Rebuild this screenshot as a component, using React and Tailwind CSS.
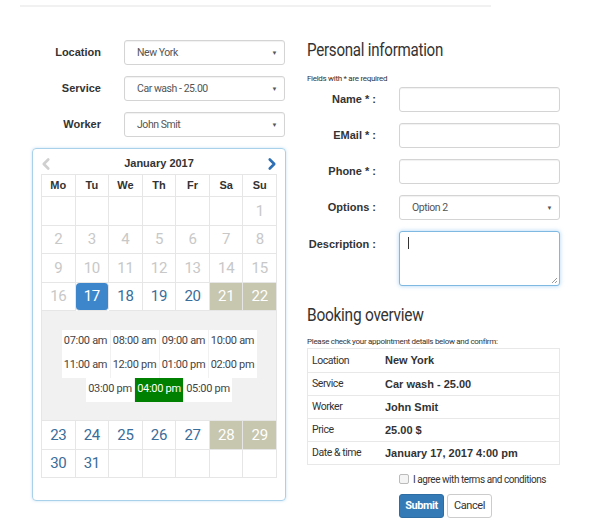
import { ChevronLeft, ChevronRight } from "lucide-react";

const NARROW = { fontFamily: 'Roboto, "Liberation Sans", sans-serif', letterSpacing: "-0.3px" };
const TIGHT = { fontFamily: 'Roboto, "Liberation Sans", sans-serif', letterSpacing: "-0.45px" };
const SANS = { fontFamily: '"Liberation Sans", Arial, sans-serif' };

const WEEKS_TOP = [
  [null, null, null, null, null, null, 1],
  [2, 3, 4, 5, 6, 7, 8],
  [9, 10, 11, 12, 13, 14, 15],
  [16, 17, 18, 19, 20, 21, 22],
];
const WEEKS_BOTTOM = [
  [23, 24, 25, 26, 27, 28, 29],
  [30, 31, null, null, null, null, null],
];
const SLOTS = [
  ["07:00 am", "08:00 am", "09:00 am", "10:00 am"],
  ["11:00 am", "12:00 pm", "01:00 pm", "02:00 pm"],
  ["03:00 pm", "04:00 pm", "05:00 pm"],
];

function dayClass(d, col) {
  if (d === null) return "";
  if (d === 17) return "bg-[#3d86cc] text-white rounded-[4px]";
  if (col >= 5 && d >= 21) return "bg-[#c7c6ae] text-white";
  if (d < 17) return "text-[#c8c8c8]";
  return "text-[#3a6d9a]";
}

function WeekRow({ week }) {
  return (
    <div className="grid grid-cols-7">
      {week.map((d, i) => (
        <div
          key={i}
          className={`h-[28.5px] flex items-center justify-center border-r border-b border-[#e6e6e6] text-[15px] ${dayClass(d, i)}`}
        >
          {d}
        </div>
      ))}
    </div>
  );
}

function SelectBox({ value }) {
  return (
    <div
      className="h-[25px] w-[161px] border border-[#d4d4d4] rounded-[3px] bg-white flex items-center justify-between pl-[12px] pr-[7px] text-[10.5px] text-[#555] shadow-[inset_0_1px_1px_rgba(0,0,0,0.06)]"
      style={TIGHT}
    >
      <span>{value}</span>
      <span className="text-[6px] text-[#555]">▼</span>
    </div>
  );
}

function TextInput() {
  return (
    <div className="h-[25px] w-[161px] border border-[#d4d4d4] rounded-[3px] bg-white shadow-[inset_0_1px_1px_rgba(0,0,0,0.06)]" />
  );
}

function FormRow({ label, children }) {
  return (
    <div className="flex items-center">
      <div className="w-[70px] pr-[1px] text-right text-[11px] font-bold text-[#333] whitespace-nowrap" style={SANS}>
        {label}
      </div>
      <div className="ml-[22px]">{children}</div>
    </div>
  );
}

const OVERVIEW = [
  ["Location", "New York"],
  ["Service", "Car wash - 25.00"],
  ["Worker", "John Smit"],
  ["Price", "25.00 $"],
  ["Date & time", "January 17, 2017 4:00 pm"],
];

export default function App() {
  return (
    <div className="w-[605px] h-[530px] bg-white relative overflow-hidden" style={SANS}>
      <div className="ml-[20px] mt-[5px] w-[471px] h-[2px] bg-[#f1f1f1]" />

      <div className="flex ml-[32px] mt-[33px] gap-[21px]">
        {/* Left column */}
        <div className="w-[254px]">
          <div className="flex flex-col gap-[11px]">
            <FormRow label="Location"><SelectBox value="New York" /></FormRow>
            <FormRow label="Service"><SelectBox value="Car wash - 25.00" /></FormRow>
            <FormRow label="Worker"><SelectBox value="John Smit" /></FormRow>
          </div>

          <div className="mt-[11px] h-[353px] border border-[#a9d2ea] rounded-[4px] shadow-[0_0_3px_rgba(100,170,220,0.35)] px-[8px] pt-[4px]">
            <div className="h-[21px] flex items-center justify-between">
              <ChevronLeft size={18} strokeWidth={3.5} className="text-[#cfcfcf] -ml-[4px]" />
              <span className="text-[11px] font-bold text-[#333]">January 2017</span>
              <ChevronRight size={18} strokeWidth={3.5} className="text-[#2d6fb5] -mr-[4px]" />
            </div>
            <div className="border-l border-t border-[#e6e6e6]">
              <div className="grid grid-cols-7">
                {["Mo", "Tu", "We", "Th", "Fr", "Sa", "Su"].map((d) => (
                  <div
                    key={d}
                    className="h-[22px] flex items-center justify-center border-r border-b border-[#e6e6e6] text-[11px] font-bold text-[#333]"
                  >
                    {d}
                  </div>
                ))}
              </div>
              <div style={NARROW}>
                {WEEKS_TOP.map((w, i) => (
                  <WeekRow key={i} week={w} />
                ))}
              </div>
              <div className="bg-[#f1f1f1] h-[110px] flex flex-col items-center justify-center border-r border-b border-[#e6e6e6]" style={NARROW}>
                {SLOTS.map((row, i) => (
                  <div key={i} className="flex gap-[1px]">
                    {row.map((s) => (
                      <div
                        key={s}
                        className={`w-[48px] h-[24px] flex items-center justify-center text-[11px] whitespace-nowrap ${
                          s === "04:00 pm" ? "bg-[#008000] text-white" : "bg-white text-[#444]"
                        }`}
                      >
                        {s}
                      </div>
                    ))}
                  </div>
                ))}
              </div>
              <div style={NARROW}>
                {WEEKS_BOTTOM.map((w, i) => (
                  <WeekRow key={i} week={w} />
                ))}
              </div>
            </div>
          </div>
        </div>

        {/* Right column */}
        <div className="w-[253px]">
          <h2 className="text-[18px] font-normal text-[#333] leading-[20px] whitespace-nowrap origin-left scale-x-[0.84]" style={NARROW}>
            Personal information
          </h2>
          <div className="text-[8px] text-[#333] mt-[14px] leading-[10px] whitespace-nowrap" style={NARROW}>
            Fields with * are required
          </div>
          <div className="flex flex-col gap-[11px] mt-[3px]">
            <FormRow label="Name * :"><TextInput /></FormRow>
            <FormRow label="EMail * :"><TextInput /></FormRow>
            <FormRow label="Phone * :"><TextInput /></FormRow>
            <FormRow label="Options :"><SelectBox value="Option 2" /></FormRow>
            <div className="flex items-start">
              <div className="w-[70px] pr-[1px] text-right text-[11px] font-bold text-[#333] pt-[5px] whitespace-nowrap">
                Description :
              </div>
              <div className="ml-[22px] relative h-[55px] w-[161px] border border-[#7fb8e0] rounded-[3px] bg-white shadow-[0_0_4px_rgba(102,175,233,0.55)]">
                <div className="absolute left-[8px] top-[5px] w-[1px] h-[12px] bg-[#333]" />
                <svg className="absolute right-[1px] bottom-[1px]" width="7" height="7" viewBox="0 0 7 7">
                  <path d="M6 1 L1 6 M6 4 L4 6" stroke="#999" strokeWidth="1" />
                </svg>
              </div>
            </div>
          </div>

          <h2 className="text-[18px] font-normal text-[#333] leading-[20px] mt-[19px] whitespace-nowrap origin-left scale-x-[0.86]" style={NARROW}>
            Booking overview
          </h2>
          <div className="text-[8px] text-[#333] mt-[12px] leading-[10px] whitespace-nowrap" style={NARROW}>
            Please check your appointment details below and confirm:
          </div>
          <div className="mt-[1px] border border-[#e8e8e8] w-[253px]">
            {OVERVIEW.map(([k, v], i) => (
              <div key={k} className={`flex items-center h-[23px] ${i > 0 ? "border-t border-[#e8e8e8]" : ""}`}>
                <div className="w-[77px] pl-[4px] text-[10.5px] text-[#333]" style={TIGHT}>{k}</div>
                <div className="text-[11px] font-bold text-[#333]">{v}</div>
              </div>
            ))}
          </div>
          <div className="flex items-center ml-[92px] mt-[8px] h-[12px]">
            <div className="shrink-0 w-[10px] h-[10px] border border-[#bbb] rounded-[2px] bg-[#f4f4f4]" />
            <span className="ml-[4px] text-[10px] text-[#333] whitespace-nowrap" style={TIGHT}>
              I agree with terms and conditions
            </span>
          </div>
          <div className="flex ml-[92px] mt-[9px] gap-[3px]">
            <div className="w-[45px] h-[24px] rounded-[3px] bg-[#337ab7] border border-[#2e6da4] text-white text-[11px] font-bold flex items-center justify-center" style={TIGHT}>
              Submit
            </div>
            <div className="w-[45px] h-[24px] rounded-[3px] bg-white border border-[#ccc] text-[#333] text-[11px] flex items-center justify-center" style={TIGHT}>
              Cancel
            </div>
          </div>
        </div>
      </div>
    </div>
  );
}
